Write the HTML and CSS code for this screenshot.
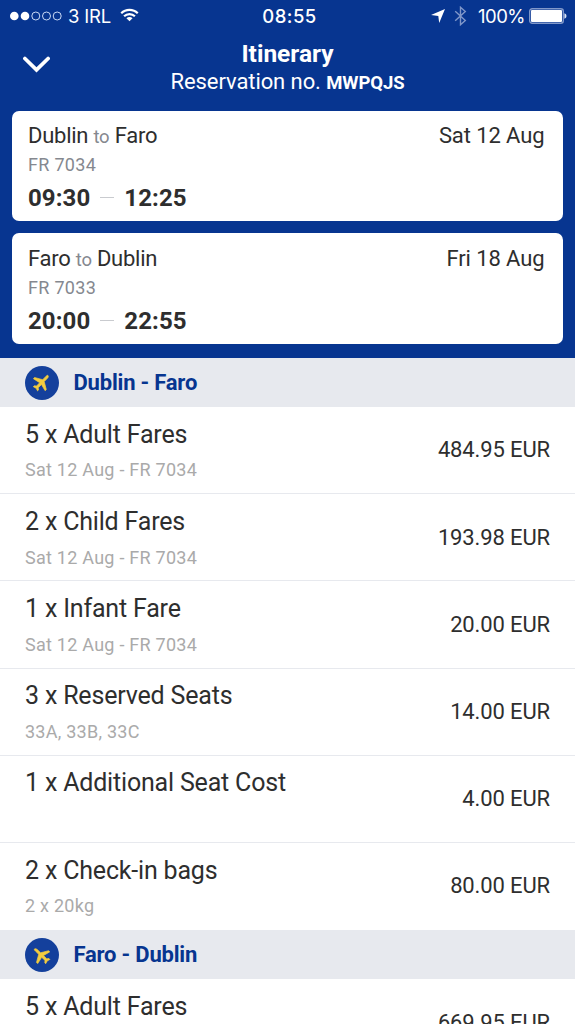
FILE: index.html
```
<!DOCTYPE html>
<html lang="en">
<head>
<meta charset="utf-8">
<title>Itinerary</title>
<link rel="stylesheet" href="styles.css">
</head>
<body>
<svg class="defs" width="0" height="0" aria-hidden="true">
  <symbol id="plane" viewBox="0 0 34 34">
    <circle cx="17" cy="17" r="17" fill="#14409c"/>
    <path transform="translate(-.7 -.2)" d="M23.600 9.600c.9.7.3 2-.5 2.900l-3.200 3.300 2.100 8-1.200 1.100-3.600-6.200-3.300 3.200.3 2.300-.9.900-1.500-2.700-2.800-1.500.9-.9 2.400.2 3.100-3.300L9.100 12.900l1.200-1.200 8.100 2.200 3.200-3.300c.7-.8 1.400-1.300 2-1z" fill="#f3cc3f" stroke="#f3cc3f" stroke-width=".7" stroke-linejoin="round"/>
  </symbol>
</svg>
<header class="header">
  <div class="status">
    <div class="status-left">
      <svg width="53" height="12" viewBox="0 0 53 12"><g fill="#fff"><circle cx="4.300" cy="6" r="4.300"/><circle cx="15" cy="6" r="4.300"/></g><g fill="none" stroke="#c9d9f5" stroke-width="1"><circle cx="25.800" cy="6" r="4"/><circle cx="36.500" cy="6" r="4"/><circle cx="47.200" cy="6" r="4"/></g></svg>
      <span class="carrier">3 IRL</span>
      <svg class="wifi" width="19" height="14" viewBox="0 0 20 14"><g fill="none" stroke="#fff" stroke-width="2.300"><path d="M1.300 5.200a12.300 12.300 0 0 1 17.400 0"/><path d="M4.300 8.400a8 8 0 0 1 11.400 0"/></g><path d="M10 13.600 6.800 10.400a4.500 4.500 0 0 1 6.400 0z" fill="#fff"/></svg>
    </div>
    <span class="clock">08:55</span>
    <div class="status-right">
      <svg width="14" height="14" viewBox="0 0 14 14"><path d="M14 0 8.200 14 7.300 7 0 6z" fill="#fff"/></svg>
      <svg class="bluetooth" width="13" height="20" viewBox="0 0 13 20"><path d="M1.200 5.300 11.300 14.400 6.500 18.700V1.300l4.800 4.300L1.200 14.700" fill="none" stroke="#8097c9" stroke-width="1.400"/></svg>
      <span class="percent">100%</span>
      <svg class="battery" width="38" height="16" viewBox="0 0 38 16"><rect x=".7" y=".7" width="33.600" height="14.600" rx="2.500" fill="none" stroke="#8097c9" stroke-width="1.400"/><rect x="2" y="2" width="31" height="12" rx="1" fill="#fff"/><path d="M35.400 5.300c2.700.6 2.700 4.800 0 5.400z" fill="#dbe4f5"/></svg>
    </div>
  </div>
  <div class="titlebar">
    <svg class="chevron" width="28" height="17" viewBox="0 0 28 17"><path d="M2.900 2.500 14.500 13.800 26.100 2.500" fill="none" stroke="#fff" stroke-width="3.700" stroke-linecap="round"/></svg>
    <div class="titles">
      <h1 class="title">Itinerary</h1>
      <p class="reservation">Reservation no. <b class="code">MWPQJS</b></p>
    </div>
  </div>
  <div class="cards">
    <section class="card">
      <div class="card-top"><span class="route">Dublin <small class="to">to</small> Faro</span><span class="date">Sat 12 Aug</span></div>
      <div class="flight">FR 7034</div>
      <div class="times"><span>09:30</span><i class="dash"></i><span>12:25</span></div>
    </section>
    <section class="card">
      <div class="card-top"><span class="route">Faro <small class="to">to</small> Dublin</span><span class="date">Fri 18 Aug</span></div>
      <div class="flight">FR 7033</div>
      <div class="times"><span>20:00</span><i class="dash"></i><span>22:55</span></div>
    </section>
  </div>
</header>
<main>
  <h2 class="leg"><svg width="34" height="34"><use href="#plane"/></svg><span>Dublin - Faro</span></h2>
  <div class="row"><div><div class="item">5 x Adult Fares</div><div class="note">Sat 12 Aug - FR 7034</div></div><span class="price">484.95 EUR</span></div>
  <div class="row"><div><div class="item">2 x Child Fares</div><div class="note">Sat 12 Aug - FR 7034</div></div><span class="price">193.98 EUR</span></div>
  <div class="row"><div><div class="item">1 x Infant Fare</div><div class="note">Sat 12 Aug - FR 7034</div></div><span class="price">20.00 EUR</span></div>
  <div class="row"><div><div class="item">3 x Reserved Seats</div><div class="note">33A, 33B, 33C</div></div><span class="price">14.00 EUR</span></div>
  <div class="row"><div><div class="item">1 x Additional Seat Cost</div></div><span class="price">4.00 EUR</span></div>
  <div class="row last"><div><div class="item">2 x Check-in bags</div><div class="note">2 x 20kg</div></div><span class="price">80.00 EUR</span></div>
  <h2 class="leg"><svg class="inbound" width="34" height="34"><use href="#plane"/></svg><span>Faro - Dublin</span></h2>
  <div class="row"><div><div class="item">5 x Adult Fares</div></div><span class="price">669.95 EUR</span></div>
</main>
</body>
</html>
```
FILE: styles.css
```
* { box-sizing: border-box; }
body {
  margin: 0;
  height: 1024px;
  overflow: hidden;
  background: #fff;
  color: #2e2e2e;
  font-family: Roboto, "Liberation Sans", sans-serif;
}
h1, h2, p { margin: 0; }
svg { display: block; flex: none; }
.defs { position: absolute; }

.header { height: 358px; background: #073590; color: #fff; }

.status {
  display: grid;
  grid-template-columns: 1fr auto 1fr;
  align-items: center;
  height: 32px;
  padding: 0 8px 0 10px;
  font: 400 18.5px/32px Inter, sans-serif;
}
.status-left, .status-right { display: flex; align-items: center; }
.status-right { justify-content: flex-end; }
.carrier { margin-left: 5px; letter-spacing: -.2px; }
.wifi { margin-left: 9px; margin-top: -2px; }
.clock { padding-left: 2px; font-weight: 500; letter-spacing: .5px; }
.bluetooth { margin-left: 9px; }
.percent { margin-left: 10.500px; letter-spacing: -.5px; }
.battery { margin-left: 4px; }

.titlebar {
  display: grid;
  grid-template-columns: 28px 1fr 28px;
  height: 78.600px;
  padding: 0 22px;
}
.chevron { margin-top: 24px; }
.titles { padding-top: 8px; text-align: center; }
.title { font-size: 24.5px; line-height: 28px; font-weight: 700; }
.reservation { font-size: 22px; line-height: 28px; letter-spacing: -.08px; }
.code { font-size: 18.5px; }

.cards { display: flex; flex-direction: column; gap: 12.400px; padding: 0 12px; }
.card {
  height: 110.400px;
  padding: 12.400px 18.500px 0 16px;
  border-radius: 7px;
  background: #fff;
  color: #2e2e2e;
}
.card-top { display: flex; justify-content: space-between; font-size: 22px; line-height: 26px; letter-spacing: -.25px; }
.date { letter-spacing: -.1px; }
.to { font-size: 18.5px; color: #85888f; }
.flight { margin-top: 4px; font-size: 18px; line-height: 22px; letter-spacing: .3px; color: #85888f; }
.times { display: flex; align-items: center; margin-top: 8px; font-size: 24px; line-height: 28px; font-weight: 700; letter-spacing: .1px; }
.dash { width: 14px; height: 1px; margin: 0 10px; background: #c9cbcf; }

.leg {
  display: flex;
  align-items: center;
  gap: 15px;
  height: 49px;
  padding-left: 24.500px;
  background: #e7e9ee;
  color: #073590;
  font-size: 22px;
  font-weight: 700;
  letter-spacing: -.2px;
}
.inbound { transform: rotate(-90deg); }
.row {
  display: flex;
  justify-content: space-between;
  height: 87.200px;
  padding: 12.700px 25px 0;
  border-bottom: 1px solid #e7e9ee;
}
.last { border-bottom: 0; }
.item { font-size: 25px; line-height: 30px; letter-spacing: -.18px; }
.note { margin-top: 9.800px; font-size: 18px; line-height: 22px; letter-spacing: .25px; color: #aaa; }
.price { margin-top: 17.800px; font-size: 22px; line-height: 26px; letter-spacing: -.13px; }
```
